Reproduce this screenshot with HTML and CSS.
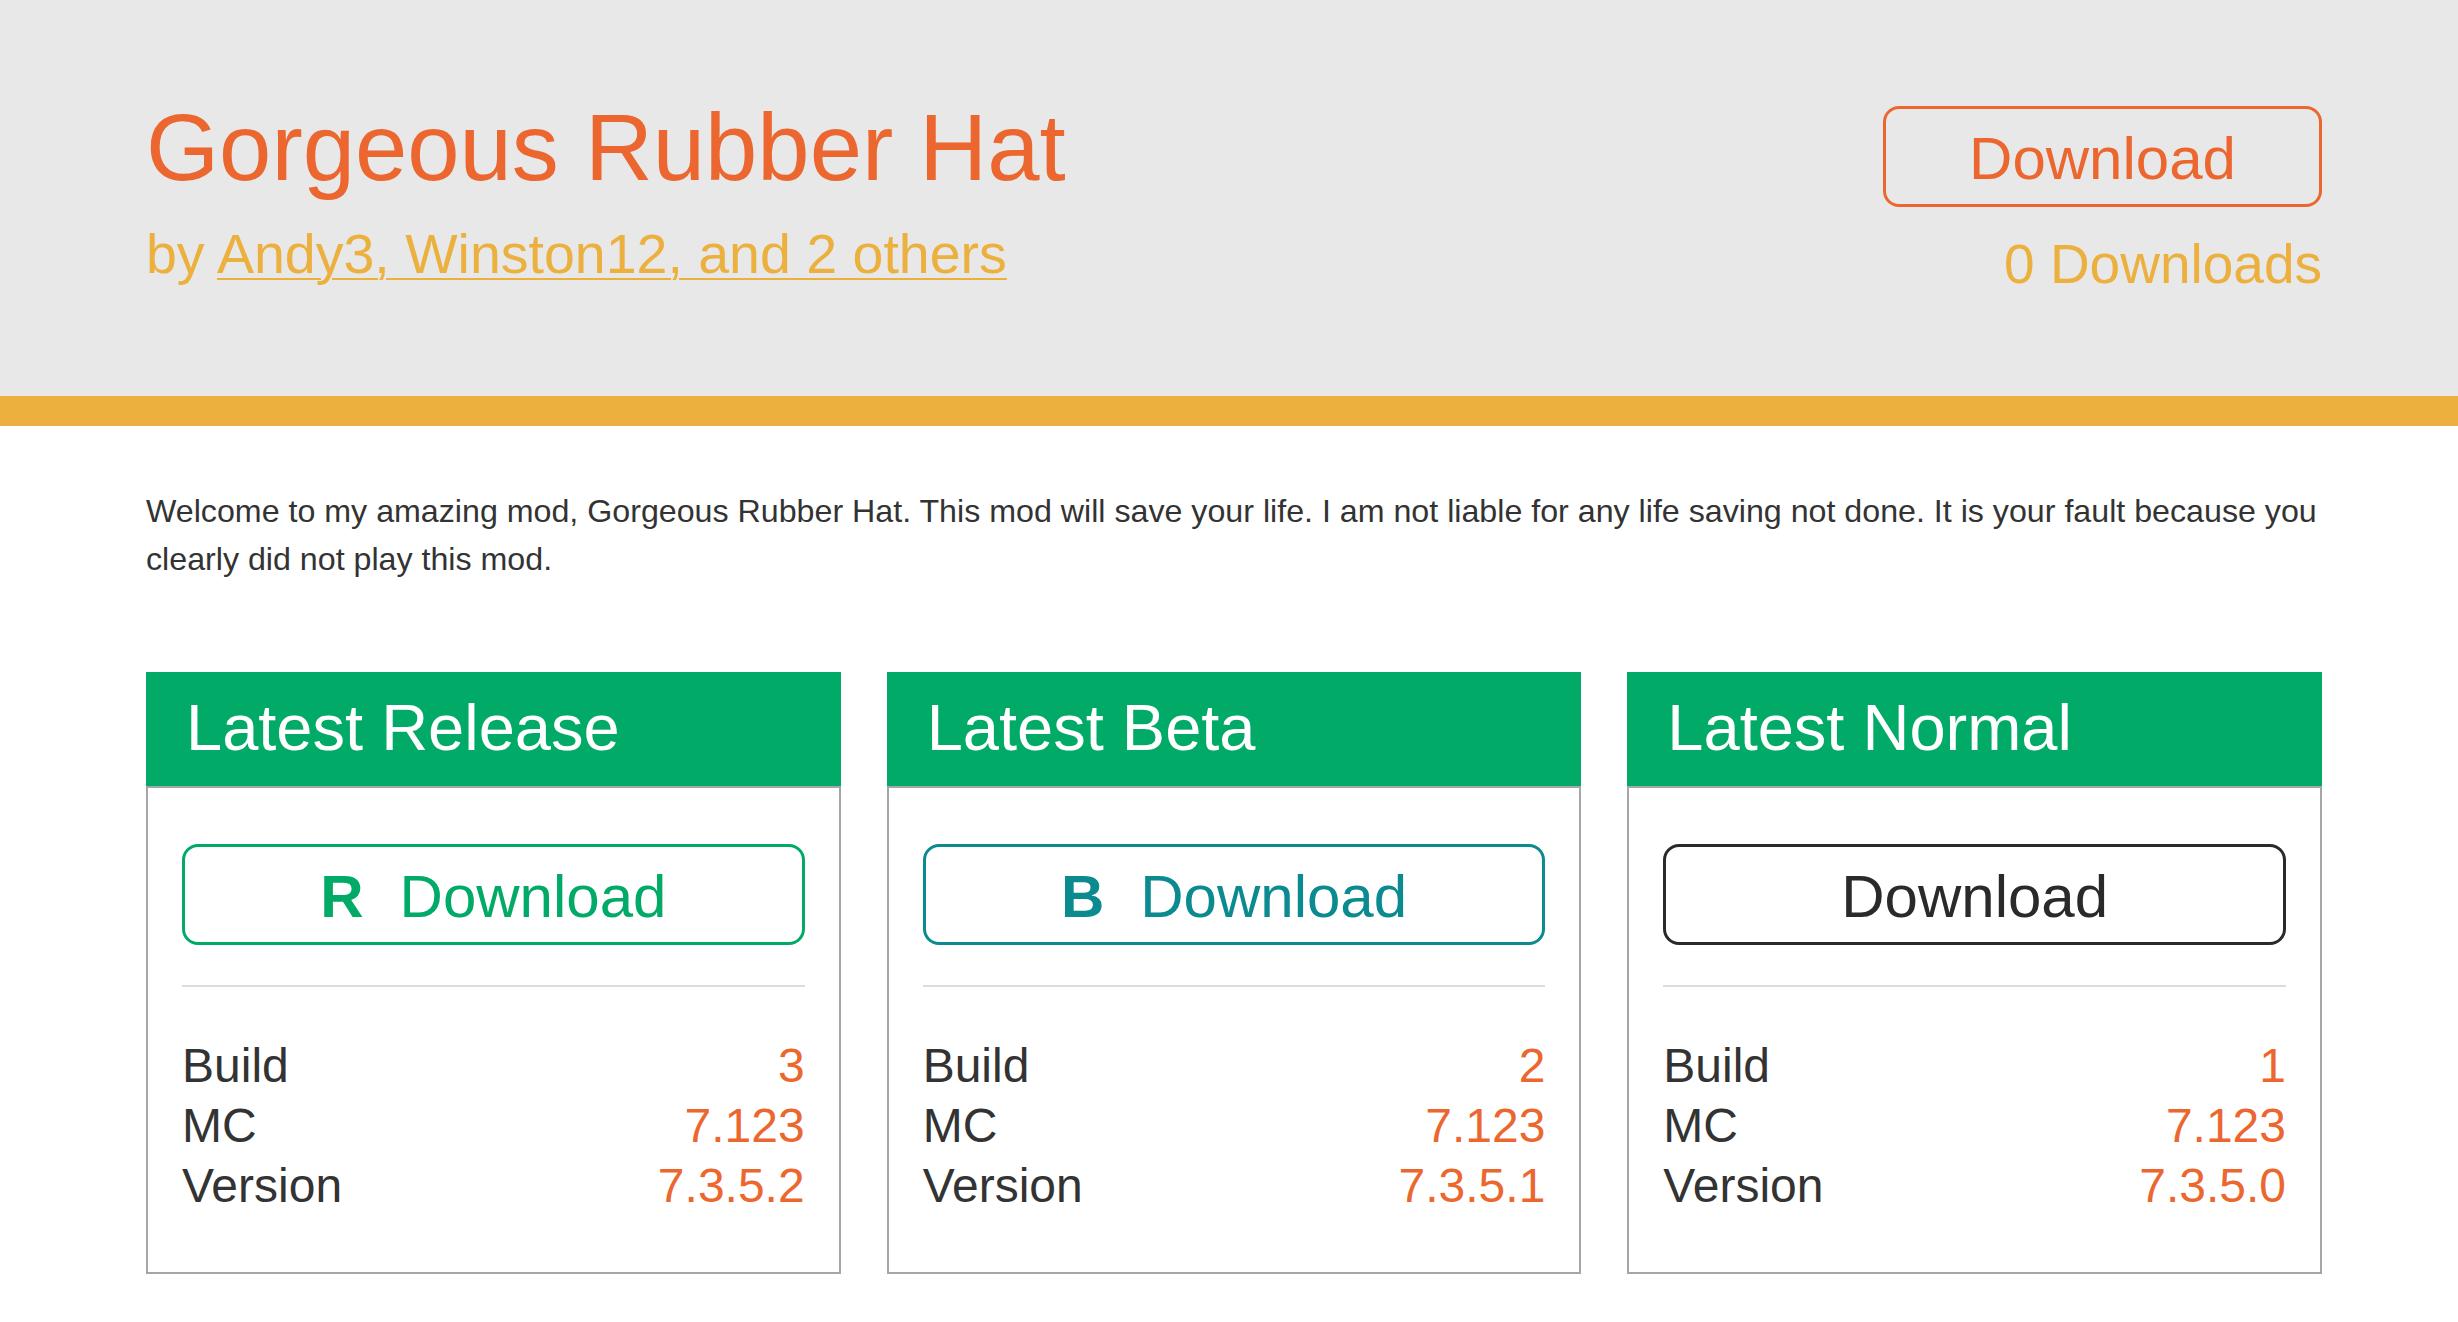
FILE: index.html
```html
<!DOCTYPE html>
<html lang="en">
<head>
<meta charset="utf-8">
<title>Gorgeous Rubber Hat</title>
<link rel="stylesheet" href="styles.css">
</head>
<body>
<header class="hero">
  <div class="hero-info">
    <h1 class="title">Gorgeous Rubber Hat</h1>
    <p class="byline">by <a href="#" class="authors">Andy3, Winston12, and 2 others</a></p>
  </div>
  <div class="hero-actions">
    <a href="#" class="btn btn-hero">Download</a>
    <p class="count">0 Downloads</p>
  </div>
</header>
<main class="content">
  <p class="description">Welcome to my amazing mod, Gorgeous Rubber Hat. This mod will save your life. I am not liable for any life saving not done. It is your fault because you clearly did not play this mod.</p>
  <section class="cards">
    <article class="card">
      <h2 class="card-head">Latest Release</h2>
      <div class="card-body">
        <a href="#" class="btn btn-release"><span class="badge">R</span>Download</a>
        <hr class="divider">
        <dl class="stats">
          <div class="stat"><dt>Build</dt><dd>3</dd></div>
          <div class="stat"><dt>MC</dt><dd>7.123</dd></div>
          <div class="stat"><dt>Version</dt><dd>7.3.5.2</dd></div>
        </dl>
      </div>
    </article>
    <article class="card">
      <h2 class="card-head">Latest Beta</h2>
      <div class="card-body">
        <a href="#" class="btn btn-beta"><span class="badge">B</span>Download</a>
        <hr class="divider">
        <dl class="stats">
          <div class="stat"><dt>Build</dt><dd>2</dd></div>
          <div class="stat"><dt>MC</dt><dd>7.123</dd></div>
          <div class="stat"><dt>Version</dt><dd>7.3.5.1</dd></div>
        </dl>
      </div>
    </article>
    <article class="card">
      <h2 class="card-head">Latest Normal</h2>
      <div class="card-body">
        <a href="#" class="btn btn-normal">Download</a>
        <hr class="divider">
        <dl class="stats">
          <div class="stat"><dt>Build</dt><dd>1</dd></div>
          <div class="stat"><dt>MC</dt><dd>7.123</dd></div>
          <div class="stat"><dt>Version</dt><dd>7.3.5.0</dd></div>
        </dl>
      </div>
    </article>
  </section>
</main>
</body>
</html>
```
FILE: styles.css
```css
* { box-sizing: border-box; }

html, body {
  margin: 0;
  padding: 0;
  background: #ffffff;
  font-family: "Liberation Sans", Arial, Helvetica, sans-serif;
  font-weight: 400;
}

.hero {
  display: flex;
  justify-content: space-between;
  align-items: flex-start;
  background: #e8e8e8;
  padding: 94px 136px 100px 146px;
  border-bottom: 30px solid #ebb03d;
}

.title {
  margin: 0;
  font-size: 94px;
  line-height: 108px;
  font-weight: 400;
  color: #eb672f;
}

.byline {
  margin: 20px 0 0;
  font-size: 55.5px;
  line-height: 64px;
  color: #ebb03d;
}

.authors {
  color: #ebb03d;
  text-decoration: underline;
  text-decoration-thickness: 2px;
  text-underline-offset: 5px;
}

.hero-actions {
  width: 439px;
  margin-top: 12px;
  display: flex;
  flex-direction: column;
  align-items: flex-end;
}

.btn {
  display: flex;
  align-items: center;
  justify-content: center;
  width: 100%;
  height: 101px;
  border: 3px solid;
  border-radius: 16px;
  font-size: 60px;
  padding-top: 3px;
  text-decoration: none;
  background: transparent;
}

.btn-hero {
  color: #eb672f;
  border-color: #eb672f;
}

.count {
  margin: 25px 0 0;
  font-size: 55px;
  line-height: 64px;
  color: #ebb03d;
}

.content {
  padding: 61px 136px 0 146px;
}

.description {
  margin: 0 0 89px;
  font-size: 32.2px;
  line-height: 48px;
  color: #333333;
}

.cards {
  display: grid;
  grid-template-columns: repeat(3, 1fr);
  gap: 46px;
}

.card-head {
  margin: 0;
  height: 114px;
  padding: 1px 36px 0 40px;
  line-height: 110px;
  font-size: 65px;
  font-weight: 400;
  color: #ffffff;
  background: #01aa66;
}

.card-body {
  border: 2px solid #a6a6a6;
  padding: 56px 34px 56px;
}

.btn-release {
  color: #01aa66;
  border-color: #01aa66;
}

.btn-beta {
  color: #0b8a8f;
  border-color: #0b8a8f;
}

.btn-normal {
  color: #2a2a2a;
  border-color: #2a2a2a;
}

.badge {
  font-weight: 700;
  margin-right: 36px;
}

.divider {
  margin: 40px 0 49px;
  border: 0;
  height: 2px;
  background: #dcdcdc;
}

.stats {
  margin: 0;
}

.stat {
  display: flex;
  justify-content: space-between;
  font-size: 48px;
  line-height: 60px;
}

.stat dt {
  color: #333333;
}

.stat dd {
  margin: 0;
  color: #eb672f;
}
```
